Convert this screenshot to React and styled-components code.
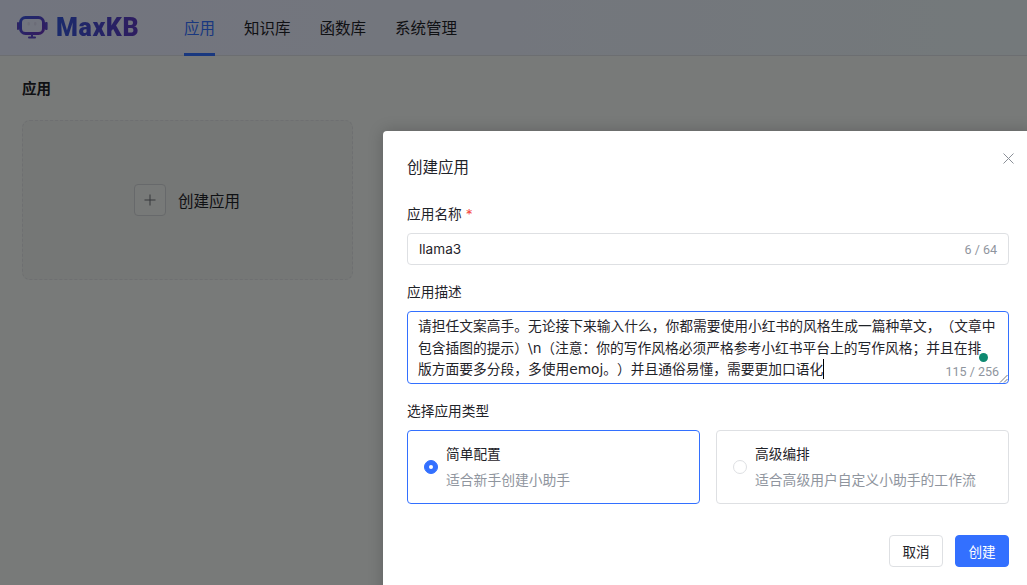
import React from "react";
import styled, { createGlobalStyle } from "styled-components";

const FONT = `Inter, "Noto Sans CJK SC", "Noto Sans", sans-serif`;

const Global = createGlobalStyle`
  html, body { margin: 0; padding: 0; height: 100%; overflow: hidden; }
  body { font-family: ${FONT}; color: #1f2329; text-spacing-trim: space-all; font-feature-settings: "chws" 0; }
  #root { height: 100%; }
  * { box-sizing: border-box; }
`;

const Page = styled.div`
  position: relative;
  width: 1027px;
  height: 585px;
  overflow: hidden;
  background: #f0f4f2;
`;
const Header = styled.header`
  height: 56px;
  display: flex;
  align-items: stretch;
  padding-left: 17px;
  background: linear-gradient(90deg, #e5eafe 0%, #e7edfa 50%, #e8f3f6 100%);
  border-bottom: 1px solid #d9dce2;
`;
const Logo = styled.div`
  display: flex;
  align-items: center;
  gap: 8px;
  width: 167px;
`;
const LogoText = styled.span`
  font-family: Roboto, "Liberation Sans", sans-serif;
  font-weight: 900;
  font-size: 25px;
  letter-spacing: 0.6px;
  background: linear-gradient(90deg, #3456d8 0%, #5d3ac0 100%);
  -webkit-background-clip: text;
  background-clip: text;
  color: transparent;
`;
const Nav = styled.nav`
  display: flex;
  gap: 29px;
`;
const NavItem = styled.div`
  position: relative;
  display: flex;
  align-items: center;
  font-size: 15.5px;
  padding-bottom: 1px;
  color: ${(p) => (p.$active ? "#3370ff" : "#1f2329")};
  &::after {
    content: "";
    display: ${(p) => (p.$active ? "block" : "none")};
    position: absolute;
    left: 0;
    right: 0;
    bottom: -1px;
    height: 3px;
    background: #3370ff;
  }
`;
const Main = styled.main`
  padding: 23px 22px;
`;
const PageTitle = styled.h1`
  margin: 0 0 21px;
  font-size: 14.5px;
  line-height: 20px;
  font-weight: 600;
`;
const CreateCard = styled.div`
  width: 331px;
  height: 160px;
  border: 1px dashed #dcdfe2;
  border-radius: 8px;
  background: #eaeeec;
  display: flex;
  align-items: center;
  justify-content: center;
  gap: 12px;
  font-size: 15.5px;
  padding-right: 1px;
`;
const PlusBox = styled.span`
  width: 32px;
  height: 32px;
  border: 1px solid #cfd2d6;
  border-radius: 4px;
  background: #eff2f0;
  display: flex;
  align-items: center;
  justify-content: center;
  color: #6a6f76;
`;
const Overlay = styled.div`
  position: absolute;
  inset: 0;
  background: rgba(0, 0, 0, 0.5);
`;
const Dialog = styled.section`
  position: absolute;
  left: 383px;
  top: 131px;
  width: 650px;
  height: 470px;
  padding: 24px;
  background: #fff;
  border-radius: 4px;
  box-shadow: 0 0 16px rgba(0, 0, 0, 0.2);
`;
const DialogTitle = styled.h2`
  margin: 1px 0 24px;
  font-size: 15.5px;
  line-height: 24px;
  font-weight: 400;
  color: #1f2329;
`;
const Close = styled.button`
  position: absolute;
  top: 21px;
  right: 18px;
  width: 13px;
  height: 13px;
  padding: 0;
  border: 0;
  background: none;
  color: #8a8f97;
  display: flex;
`;
const Field = styled.div`
  margin-bottom: ${(p) => p.$mb || 17}px;
`;
const Label = styled.label`
  display: block;
  font-size: 13.7px;
  line-height: 20px;
  margin-bottom: ${(p) => p.$mb || 9}px;
  color: #1f2329;
`;
const Required = styled.span`
  color: #f54a45;
  margin-left: 4px;
`;
const InputBox = styled.div`
  height: 32px;
  border: 1px solid #dee0e3;
  border-radius: 4px;
  padding: 0 11px;
  display: flex;
  align-items: center;
  justify-content: space-between;
  font-size: 13.6px;
`;
const Counter = styled.span`
  font-family: Roboto, sans-serif;
  font-size: 12.5px;
  color: #8f959e;
`;
const AreaBox = styled.div`
  position: relative;
  height: 73px;
  border: 1px solid #3370ff;
  border-radius: 4px;
  padding: 4px 8px 4px 10px;
  font-family: "DejaVu Sans", "Noto Sans CJK SC", sans-serif;
  font-size: 13.75px;
  line-height: 21.6px;
`;
const Caret = styled.span`
  display: inline-block;
  width: 1px;
  height: 20px;
  background: #000;
  vertical-align: -5px;
`;
const AreaCounter = styled(Counter)`
  position: absolute;
  right: 9px;
  bottom: 3px;
  line-height: 16px;
`;
const Dot = styled.span`
  position: absolute;
  left: 571px;
  top: 41px;
  width: 9px;
  height: 9px;
  border-radius: 50%;
  background: #0e8a72;
`;
const Grip = styled.svg`
  position: absolute;
  right: 0;
  bottom: 0;
`;
const Options = styled.div`
  display: grid;
  grid-template-columns: 293px 293px;
  gap: 16px;
`;
const Option = styled.div`
  height: 74px;
  border: 1px solid ${(p) => (p.$selected ? "#3370ff" : "#dee0e3")};
  border-radius: 4px;
  padding: 0 16px;
  display: flex;
  align-items: center;
  gap: 8px;
`;
const Radio = styled.span`
  flex: none;
  width: 14px;
  height: 14px;
  border-radius: 50%;
  border: 1px solid ${(p) => (p.$on ? "#3370ff" : "#dee0e3")};
  background: ${(p) => (p.$on ? "#3370ff" : "#fff")};
  display: flex;
  align-items: center;
  justify-content: center;
  &::after {
    content: "";
    width: 4px;
    height: 4px;
    border-radius: 50%;
    background: #fff;
    display: ${(p) => (p.$on ? "block" : "none")};
  }
`;
const OptionText = styled.div`
  display: flex;
  flex-direction: column;
  gap: 6px;
`;
const OptionName = styled.div`
  font-size: 13.7px;
  line-height: 20px;
`;
const OptionHint = styled.div`
  font-size: 13.8px;
  line-height: 20px;
  color: #8f959e;
`;
const Footer = styled.div`
  display: flex;
  justify-content: flex-end;
  gap: 12px;
  margin-top: 31px;
`;
const Button = styled.button`
  width: 54px;
  height: 32px;
  padding: 0;
  border-radius: 4px;
  font-family: ${FONT};
  font-size: 13.6px;
  border: 1px solid ${(p) => (p.$primary ? "#3370ff" : "#dee0e3")};
  background: ${(p) => (p.$primary ? "#3370ff" : "#fff")};
  color: ${(p) => (p.$primary ? "#fff" : "#1f2329")};
`;

const RobotLogo = () => (
  <svg width="31" height="23" viewBox="0 0 31 23" fill="none">
    <defs>
      <linearGradient id="lg" x1="0" y1="0" x2="1" y2="1">
        <stop offset="0" stopColor="#3a55dc" />
        <stop offset="1" stopColor="#6a35bd" />
      </linearGradient>
    </defs>
    <rect x="3.5" y="1.5" width="23" height="16" rx="5" stroke="url(#lg)" strokeWidth="3" />
    <rect x="0" y="6" width="2" height="8" rx="1" fill="#5a46c8" />
    <rect x="28" y="6" width="2.6" height="8" rx="1" fill="#5a46c8" />
    <rect x="10.5" y="6" width="2.4" height="3.6" rx="1" fill="#d8daf0" />
    <rect x="17" y="6" width="2.4" height="3.6" rx="1" fill="#d8daf0" />
    <rect x="11" y="20.4" width="8" height="2" rx="1" fill="#5a46c8" />
    <rect x="14" y="18" width="2" height="3" fill="#5a46c8" />
  </svg>
);

export default function App() {
  return (
    <Page>
      <Global />
      <Header>
        <Logo>
          <RobotLogo />
          <LogoText>MaxKB</LogoText>
        </Logo>
        <Nav>
          <NavItem $active>应用</NavItem>
          <NavItem>知识库</NavItem>
          <NavItem>函数库</NavItem>
          <NavItem>系统管理</NavItem>
        </Nav>
      </Header>
      <Main>
        <PageTitle>应用</PageTitle>
        <CreateCard>
          <PlusBox>
            <svg width="12" height="12" viewBox="0 0 12 12" stroke="currentColor" strokeWidth="1">
              <path d="M6 0.5v11M0.5 6h11" />
            </svg>
          </PlusBox>
          创建应用
        </CreateCard>
      </Main>
      <Overlay />
      <Dialog>
        <DialogTitle>创建应用</DialogTitle>
        <Close aria-label="关闭">
          <svg width="13" height="13" viewBox="0 0 13 13" stroke="currentColor" strokeWidth="1" fill="none">
            <path d="M1.5 1.5l10 10M11.5 1.5l-10 10" />
          </svg>
        </Close>
        <Field>
          <Label>
            应用名称<Required>*</Required>
          </Label>
          <InputBox>
            <span>llama3</span>
            <Counter>6 / 64</Counter>
          </InputBox>
        </Field>
        <Field>
          <Label>应用描述</Label>
          <AreaBox>
            请担任文案高手。无论接下来输入什么，你都需要使用小红书的风格生成一篇种草文，（文章中
            <br />
            包含插图的提示）\n（注意：你的写作风格必须严格参考小红书平台上的写作风格；并且在排
            <br />
            版方面要多分段，多使用emoj。）并且通俗易懂，需要更加口语化
            <Caret />
            <Dot />
            <AreaCounter>115 / 256</AreaCounter>
            <Grip width="9" height="9" viewBox="0 0 9 9" stroke="#555" strokeWidth="0.8">
              <path d="M1 8.5L8.5 1M5 8.5L8.5 5" />
            </Grip>
          </AreaBox>
        </Field>
        <Field $mb={1}>
          <Label>选择应用类型</Label>
          <Options>
            <Option $selected>
              <Radio $on />
              <OptionText>
                <OptionName>简单配置</OptionName>
                <OptionHint>适合新手创建小助手</OptionHint>
              </OptionText>
            </Option>
            <Option>
              <Radio />
              <OptionText>
                <OptionName>高级编排</OptionName>
                <OptionHint>适合高级用户自定义小助手的工作流</OptionHint>
              </OptionText>
            </Option>
          </Options>
        </Field>
        <Footer>
          <Button>取消</Button>
          <Button $primary>创建</Button>
        </Footer>
      </Dialog>
    </Page>
  );
}
